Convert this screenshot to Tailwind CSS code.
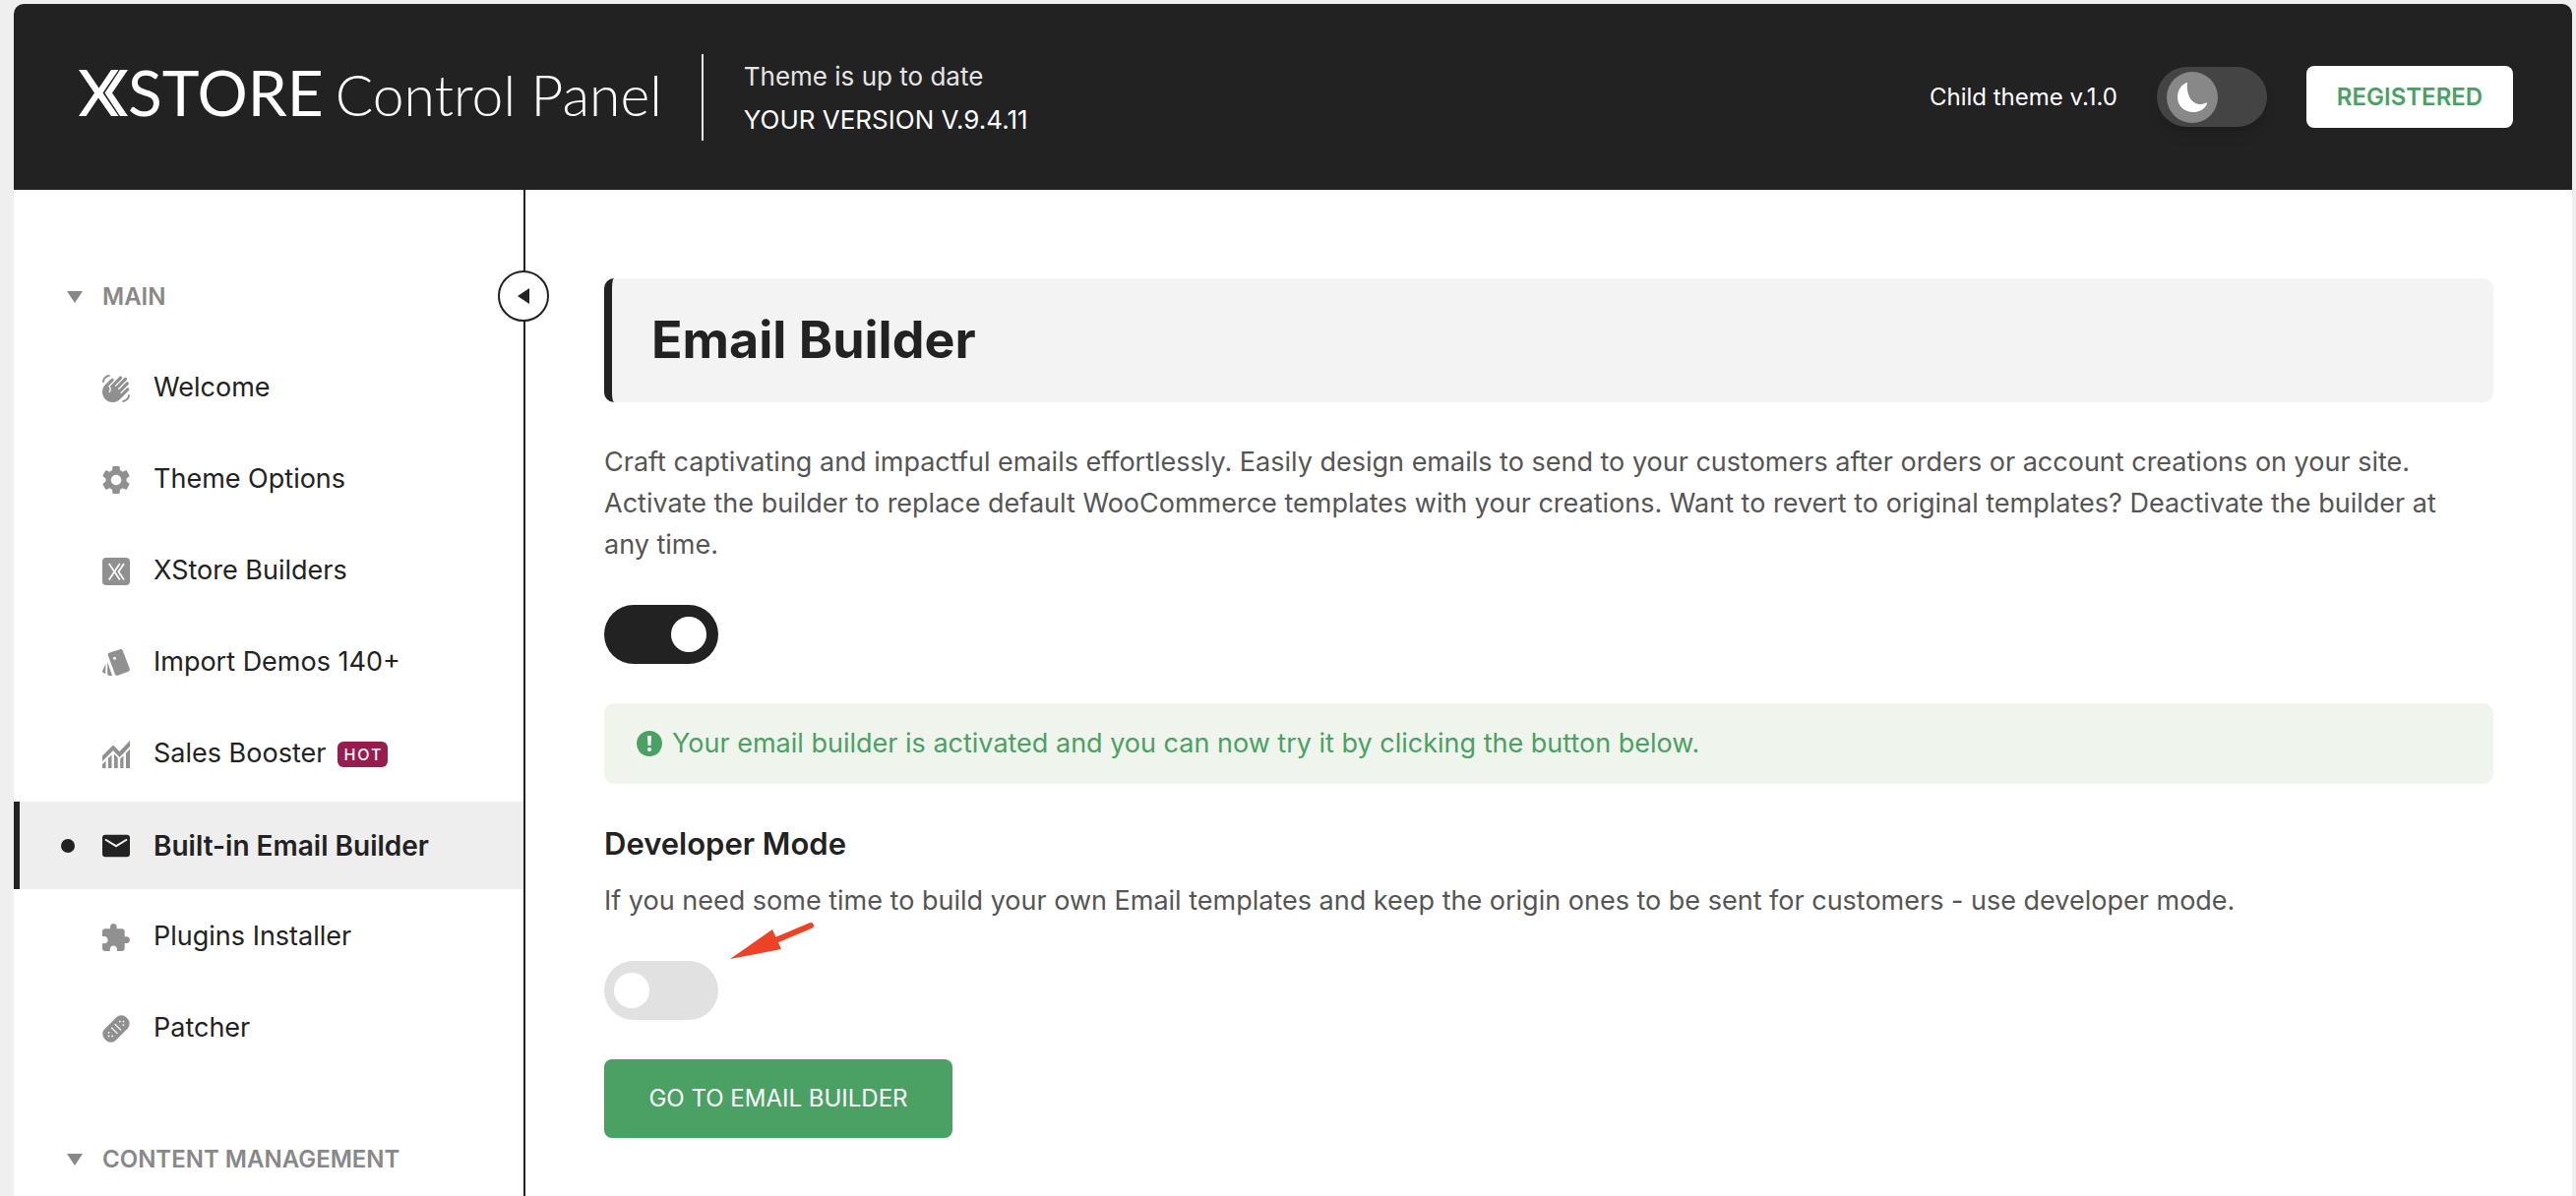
<!DOCTYPE html>
<html lang="en">
<head>
  <meta charset="utf-8">
  <meta name="viewport" content="width=device-width, initial-scale=1">
  <title>XStore Control Panel</title>
  <script src="https://cdn.jsdelivr.net/npm/@tailwindcss/browser@4"></script>
</head>
<body class="bg-[#efefef] font-['Inter',sans-serif] text-[#222]">
  <div class="ml-[14px] mr-1 mt-1 min-h-screen rounded-t-[10px] overflow-hidden bg-white flex flex-col">

    <header class="bg-[#222] h-[189px] pl-[66px] pr-[60px] flex items-center text-white">
      <a href="#" class="pb-2 flex items-baseline font-['Lato',sans-serif] text-[64px] leading-[80px]">
        <svg class="w-[50px] h-[47px]" viewBox="0 0 50 47" fill="currentColor">
          <path d="M0 0h8l12.500 18.500L33 0h7.500L24.500 23.500 40.500 47H33L20 28.500 7.500 47H0l16-23.500z" />
          <path d="M42 0h8L34 23.500 50 47h-8L26.500 23.500z" />
        </svg>
        <span>STORE</span>
        <span class="ml-3 text-[57px] font-light">Control Panel</span>
      </a>
      <div class="ml-10 pl-[41px] pt-px h-[88px] border-l-2 border-[#e5e5e5] text-[26px] leading-[44px]">
        <div class="text-[#e5e5e5]">Theme is up to date</div>
        <div>YOUR VERSION V.9.4.11</div>
      </div>
      <div class="ml-auto flex items-center gap-10">
        <span class="text-2xl">Child theme v.1.0</span>
        <button aria-label="Dark mode" class="w-[112px] h-[61px] px-[10px] rounded-full bg-[#444] shadow-lg flex items-center cursor-pointer">
          <span class="size-[52px] rounded-full bg-[#888] flex items-center justify-center">
            <svg class="size-[30px]" viewBox="0 0 30 30" fill="currentColor">
              <path d="M10 0C9 9 12 21 22 22c3 .3 5-.6 7-1.500 1-.4 1.500.3 1 1.200C27.500 27 22 30 16 30 7 30 0 23.500 0 15 0 8.500 3 3 8.500.3 9.500-.2 10-.1 10 0z" />
            </svg>
          </span>
        </button>
        <a href="#" class="w-[210px] h-[63px] rounded-lg bg-white text-[#4aa163] text-2xl font-semibold flex items-center justify-center">REGISTERED</a>
      </div>
    </header>

    <div class="grow flex">
      <aside class="relative w-[520px] shrink-0 border-r-2 border-[#222] pt-16 pb-10">
        <button aria-label="Collapse menu" class="absolute top-[82px] -right-[26px] size-[52px] rounded-full border-2 border-[#222] bg-white flex items-center justify-center cursor-pointer">
          <svg class="w-3 h-4" viewBox="0 0 12 16" fill="currentColor"><path d="M12 0v16L0 8z" /></svg>
        </button>

        <nav class="flex flex-col gap-1 text-[27px]">
          <button class="h-[89px] pl-[54px] flex items-center gap-5 text-2xl font-semibold text-[#888] cursor-pointer">
            <svg class="w-4 h-3" viewBox="0 0 16 12" fill="currentColor"><path d="M0 0h16L8 12z" /></svg>
            MAIN
          </button>
          <a href="#" class="h-[89px] pl-[90px] flex items-center gap-6">
            <svg class="size-7 text-[#909090]" viewBox="1 1 22 22" fill="currentColor"><path d="M23 17c0 3.310-2.690 6-6 6v-1.500c2.480 0 4.500-2.020 4.500-4.500H23zM1 7c0-3.310 2.690-6 6-6v1.500C4.520 2.500 2.500 4.520 2.500 7H1zm7.010-2.680-4.600 4.600c-3.220 3.220-3.220 8.450 0 11.670s8.450 3.220 11.670 0l7.070-7.070c.49-.49.49-1.280 0-1.770-.49-.49-1.280-.49-1.770 0l-4.420 4.420-.71-.71 6.540-6.540c.49-.49.49-1.280 0-1.770s-1.280-.49-1.770 0l-5.830 5.830-.71-.71 6.890-6.890c.49-.49.49-1.280 0-1.770s-1.280-.49-1.770 0l-6.890 6.890-.71-.71 5.480-5.480c.49-.49.49-1.280 0-1.770s-1.280-.49-1.770 0l-7.620 7.620c1.220 1.570 1.110 3.840-.33 5.280l-.71-.71c1.170-1.170 1.170-3.070 0-4.240l-.35-.35 4.070-4.070c.49-.49.49-1.280 0-1.770-.5-.48-1.290-.48-1.780.01z" /></svg>
            Welcome
          </a>
          <a href="#" class="h-[89px] pl-[90px] flex items-center gap-6">
            <svg class="size-7 text-[#909090]" viewBox="2.400 2.400 19.200 19.200" fill="currentColor"><path d="M19.140 12.940c.04-.3.06-.61.06-.94 0-.32-.02-.64-.07-.94l2.030-1.580c.18-.14.23-.41.12-.61l-1.920-3.320c-.12-.22-.37-.29-.59-.22l-2.390.96c-.5-.38-1.030-.7-1.620-.94l-.36-2.540c-.04-.24-.24-.41-.48-.41h-3.840c-.24 0-.43.17-.47.41l-.36 2.540c-.59.24-1.130.57-1.620.94l-2.390-.96c-.22-.08-.47 0-.59.22L2.740 8.870c-.12.21-.08.47.12.61l2.030 1.580c-.05.3-.09.63-.09.94s.02.64.07.94l-2.030 1.580c-.18.14-.23.41-.12.61l1.920 3.320c.12.22.37.29.59.22l2.390-.96c.5.38 1.030.7 1.620.94l.36 2.540c.05.24.24.41.48.41h3.840c.24 0 .44-.17.47-.41l.36-2.540c.59-.24 1.130-.56 1.620-.94l2.390.96c.22.08.47 0 .59-.22l1.920-3.320c.12-.22.07-.47-.12-.61zM12 15.600c-1.980 0-3.600-1.620-3.600-3.600s1.620-3.600 3.600-3.600 3.600 1.620 3.600 3.600-1.620 3.600-3.600 3.600z" /></svg>
            Theme Options
          </a>
          <a href="#" class="h-[89px] pl-[90px] flex items-center gap-6">
            <svg class="size-7 text-[#909090]" viewBox="0 0 28 28" fill="currentColor">
              <rect width="28" height="28" rx="4" />
              <g fill="none" stroke="#fff" stroke-width="1.800"><path d="M6.800 6l11 16.500M17.800 6l-11 16.500M22 6l-5.500 8.250L22 22.500" /></g>
            </svg>
            XStore Builders
          </a>
          <a href="#" class="h-[89px] pl-[90px] flex items-center gap-6">
            <svg class="size-7 text-[#909090]" viewBox="0 0 28 28" fill="currentColor">
              <path fill-rule="evenodd" d="M7.500 3.500l10.500-3.300c1.300-.4 2.300.1 2.800 1.300l7 18.500c.4 1.200 0 2.200-1.200 2.700l-11 4c-1.300.4-2.300 0-2.700-1.200L5.800 6.200c-.4-1.300.3-2.200 1.700-2.700zM12.500 7.700a1.500 1.500 0 1 0 0 3 1.500 1.500 0 1 0 0-3z" />
              <path d="M5.200 13l4.800 14H7.500c-1.500 0-2.300-.8-2.300-2.200zM3.300 15v10L1 24c-.9-.5-1.200-1.300-.8-2.300z" />
            </svg>
            Import Demos 140+
          </a>
          <a href="#" class="h-[89px] pl-[90px] flex items-center gap-6">
            <svg class="size-7 text-[#909090]" viewBox="0 0 28 28" fill="currentColor">
              <path d="M0 15.500L11 4.500l6.500 6.500L28 0v6L17.500 17 11 10 0 21z" />
              <path d="M0 24l3.500-3.500V28H0zM6 18l3.500-3.500V28H6zM12 13.500l3.700 4V28H12zM18.200 18.500l3.300-3V28h-3.300zM24 13l4-4.500V28h-4z" />
            </svg>
            <span class="flex items-center gap-3">Sales Booster
              <span class="h-[26px] pl-[6px] pr-1 rounded-md bg-[#961d4e] text-white text-base leading-[26px] tracking-[2px] font-medium">HOT</span>
            </span>
          </a>
          <a href="#" aria-current="page" class="h-[89px] border-l-[6px] border-[#222] bg-[#eee] pl-[42px] flex items-center text-[28px] font-semibold">
            <span class="size-[14px] mr-7 rounded-full bg-[#222]"></span>
            <svg class="size-7 mr-6" viewBox="2 2 20 20" fill="currentColor"><path d="M20 4H4c-1.100 0-1.990.9-1.990 2L2 18c0 1.100.9 2 2 2h16c1.100 0 2-.9 2-2V6c0-1.100-.9-2-2-2zm0 4l-8 5-8-5c-.4-.8.2-1.300.8-1L12 11.200 19.200 7c.6-.3 1.200.2.8 1z" /></svg>
            Built-in Email Builder
          </a>
          <a href="#" class="h-[89px] pl-[90px] flex items-center gap-6">
            <svg class="size-7 text-[#909090]" viewBox="2 1 21 21" fill="currentColor"><path d="M20.500 11H19V7c0-1.100-.9-2-2-2h-4V3.500C13 2.120 11.880 1 10.500 1S8 2.120 8 3.500V5H4c-1.100 0-1.990.9-1.990 2v3.800H3.500c1.490 0 2.700 1.210 2.700 2.700s-1.210 2.700-2.700 2.700H2V20c0 1.100.9 2 2 2h3.800v-1.500c0-1.490 1.210-2.700 2.700-2.700 1.490 0 2.700 1.210 2.700 2.700V22H17c1.100 0 2-.9 2-2v-4h1.500c1.380 0 2.500-1.120 2.500-2.500S21.880 11 20.500 11z" /></svg>
            Plugins Installer
          </a>
          <a href="#" class="h-[89px] pl-[90px] flex items-center gap-6">
            <svg class="size-7 text-[#909090]" viewBox="0 0 28 28" fill="currentColor">
              <g transform="rotate(-45 14 14)">
                <rect x="-1.500" y="6" width="31" height="16" rx="7" />
                <g fill="#fff">
                  <circle cx="3.500" cy="14" r=".9" /><circle cx="6" cy="11.500" r=".9" /><circle cx="6" cy="16.500" r=".9" />
                  <circle cx="24.500" cy="14" r=".9" /><circle cx="22" cy="11.500" r=".9" /><circle cx="22" cy="16.500" r=".9" />
                </g>
                <path d="M11.500 9.500v9M16.500 9.500v9" stroke="#fff" stroke-width="1.200" />
              </g>
            </svg>
            Patcher
          </a>
          <button class="mt-10 h-[89px] pl-[54px] flex items-center gap-5 text-2xl font-semibold text-[#888] cursor-pointer">
            <svg class="w-4 h-3" viewBox="0 0 16 12" fill="currentColor"><path d="M0 0h16L8 12z" /></svg>
            CONTENT MANAGEMENT
          </button>
        </nav>
      </aside>

      <main class="grow pt-[90px] pl-20 pr-20 text-[27px] leading-[42px] text-[#555]">
        <h1 class="h-[126px] pl-10 flex items-center border-l-8 border-[#222] rounded-[10px] bg-[#f3f3f3] text-[52px] font-bold text-[#222]">Email Builder</h1>
        <p class="mt-10 pr-6">Craft captivating and impactful emails effortlessly. Easily design emails to send to your customers after orders or account creations on your site. Activate the builder to replace default WooCommerce templates with your creations. Want to revert to original templates? Deactivate the builder at any time.</p>

        <label class="mt-10 w-[116px] h-[60px] px-3 rounded-full bg-[#e1e1e1] has-checked:bg-[#222] flex items-center cursor-pointer">
          <input type="checkbox" aria-label="Email builder" class="appearance-none size-9 rounded-full bg-white checked:ml-auto" checked>
        </label>

        <div class="mt-10 h-[82px] px-[33px] rounded-[10px] bg-[#eff4ec] flex items-center gap-[10px] text-[#4aa163]">
          <svg class="size-[26px]" viewBox="0 0 26 26">
            <circle cx="13" cy="13" r="13" fill="currentColor" />
            <path d="M11 5h4l-.5 10h-3z" fill="#fff" /><circle cx="13" cy="19" r="2" fill="#fff" />
          </svg>
          Your email builder is activated and you can now try it by clicking the button below.
        </div>

        <h2 class="mt-10 text-[31px] font-semibold text-[#222]">Developer Mode</h2>
        <p class="mt-4">If you need some time to build your own Email templates and keep the origin ones to be sent for customers - use developer mode.</p>

        <div class="relative mt-10 w-[116px]">
          <label class="h-[60px] px-[10px] rounded-full bg-[#e1e1e1] has-checked:bg-[#222] flex items-center cursor-pointer">
            <input type="checkbox" aria-label="Developer mode" class="appearance-none size-9 rounded-full bg-white checked:ml-auto">
          </label>
          <svg class="absolute left-32 -top-10 w-[88px] h-10" viewBox="0 0 88 40">
            <path d="M0 38L43 8l9 20z" fill="#ee4227" />
            <path d="M44 20L82 4" stroke="#ee4227" stroke-width="6" stroke-linecap="round" />
          </svg>
        </div>

        <a href="#" class="mt-10 w-[354px] h-20 rounded-lg bg-[#4aa163] text-white text-2xl flex items-center justify-center">GO TO EMAIL BUILDER</a>
      </main>
    </div>
  </div>
</body>
</html>
